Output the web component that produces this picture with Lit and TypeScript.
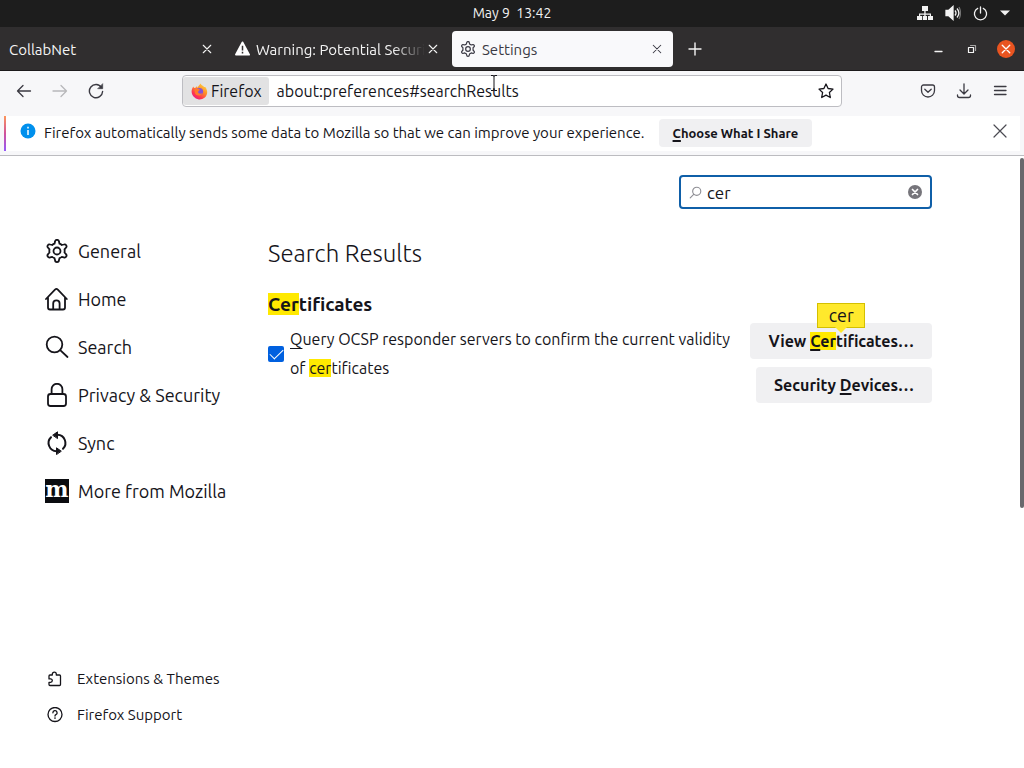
import { LitElement, html, css, svg, type TemplateResult } from "lit";
import { customElement } from "lit/decorators.js";

const gear = svg`<path d="M10 2.8 a2 2 0 0 1 4 0 l.5 1.9 a8 8 0 0 1 2.3 1.3 l2-.5 a2 2 0 0 1 2 3.4 l-1.3 1.5 a7 7 0 0 1 0 3.1 l1.3 1.5 a2 2 0 0 1 -2 3.4 l-2-.5 a8 8 0 0 1 -2.3 1.3 l-.5 1.9 a2 2 0 0 1 -4 0 l-.5-1.9 a8 8 0 0 1 -2.3-1.3 l-2 .5 a2 2 0 0 1 -2-3.4 l1.3-1.5 a7 7 0 0 1 0-3.1 L3.2 8.9 a2 2 0 0 1 2-3.4 l2 .5 a8 8 0 0 1 2.3-1.3 z"/><circle cx="12" cy="12" r="3.5"/>`;
const cross = svg`<path d="M3 3l10 10M13 3L3 13"/>`;

const line = (size: number, box: number, width: number, body: unknown): TemplateResult => html`
  <svg width=${size} height=${size} viewBox="0 0 ${box} ${box}" fill="none" stroke="currentColor"
    stroke-width=${width} stroke-linecap="round" stroke-linejoin="round" aria-hidden="true">${body}</svg>`;

const sections: [string, unknown][] = [
  ["General", gear],
  ["Home", svg`<path d="M1 12 10 2.600a2 2 0 0 1 2.800 0L21.800 12M3 10.500V20.500a2 2 0 0 0 2 2h13a2 2 0 0 0 2-2V10.500M8.200 22.500v-6a3.200 3.200 0 0 1 6.400 0v6"/>`],
  ["Search", svg`<circle cx="9.500" cy="9.500" r="7.800"/><path d="M15.200 15.200 22.500 22"/>`],
  ["Privacy & Security", svg`<rect x="3" y="11" width="18" height="12" rx="2.500"/><path d="M6.600 11V6.200a5.400 5.400 0 0 1 10.800 0V11"/>`],
  ["Sync", svg`<path d="M6 6.200A8.200 8.200 0 0 0 11.500 20.200M18 17.800A8.200 8.200 0 0 0 12.500 3.800" stroke-width="2"/><path d="M8 4 12.500.8v6.400zM16 20 11.500 16.800v6.400z" fill="currentColor" stroke-width="1"/>`],
  ["More from Mozilla", svg`<path d="M0 0h24v24H0z" fill="#0b0c10" stroke="none"/><text x="12" y="18" text-anchor="middle" font-family="DejaVu Serif, serif" font-size="22" font-weight="700" fill="#fff" stroke="none">m</text>`],
];

const links: [string, unknown][] = [
  ["Extensions & Themes", svg`<path d="M2 5.500V5a1 1 0 0 1 1-1h2.300V3.200a2 2 0 0 1 4 0V4h3.200a1 1 0 0 1 1 1v8.500a1 1 0 0 1-1 1H3a1 1 0 0 1-1-1v-2.200h1.600a1.700 1.700 0 0 0 0-3.400H2z"/>`],
  ["Firefox Support", svg`<circle cx="8" cy="7.500" r="7"/><path d="M5.900 5.800a2.100 2.100 0 1 1 3 1.900c-.6.300-.9.600-.9 1.300"/><circle cx="8" cy="11.100" r=".3"/>`],
];

@customElement("app-root")
export class AppRoot extends LitElement {
  static styles = css`
    :host {
      display: flex;
      flex-direction: column;
      min-height: 100vh;
      position: relative;
      background: #fff;
      color: #15141a;
      font: 15px/20px Ubuntu, "Noto Sans", sans-serif;
    }
    * { box-sizing: border-box; }
    svg { display: block; flex: none; }
    button, input { font: inherit; color: inherit; }
    button { border: 0; padding: 0; background: none; }
    a { color: inherit; text-decoration: none; }
    u { text-decoration-thickness: 1px; text-underline-offset: 3px; text-decoration-skip-ink: none; }
    button u { text-decoration-thickness: 2px; text-underline-offset: 2px; }
    mark { background: #ffe900; color: inherit; }

    .system { display: grid; grid-template-columns: 1fr auto 1fr; align-items: center; height: 27px; padding: 0 14px 1px; background: #1d1d1d; color: #f2f2f2; font-size: 14px; white-space: pre; }
    .status { display: flex; justify-content: flex-end; align-items: center; gap: 12px; grid-column: 3; }
    .clock { grid-column: 2; }

    .tabs { display: flex; align-items: center; height: 44px; padding-right: 9px; background: #302e2f; color: #f4f4f4; border-bottom: 1px solid #1c1a1b; }
    .tab { display: flex; align-items: center; gap: 6px; flex: 0 1 226px; height: 36px; padding: 0 13px 0 9px; min-width: 0; }
    .tab .name { flex: 1; overflow: hidden; white-space: nowrap; padding-top: 2px; }
    .tab .faded { margin-right: -4px; mask-image: linear-gradient(to left, transparent, #000 32px); }
    .tab.current { flex-basis: 221px; padding: 0 10px 0 8px; border-radius: 4px; background: #f9f9fb; color: #3a3944; }
    .add { margin-left: 14px; }
    .window { display: flex; align-items: center; gap: 18px; margin-left: auto; }
    .quit { display: grid; place-items: center; width: 18px; height: 18px; border-radius: 50%; background: #e95420; color: #fff; }

    .toolbar { display: flex; align-items: center; height: 41px; padding: 0 16px 1px; background: #f7f7f9; color: #3b3a42; }
    .nav { display: flex; gap: 20px; flex: 0 0 166px; }
    .off { color: #b8b8ba; }
    .address { display: flex; align-items: center; flex: 0 1 660px; height: 32px; border: 1px solid #bdbdc2; border-radius: 4px; background: #fff; color: #15141a; padding-right: 7px; font-size: 16px; }
    .identity { display: flex; align-items: center; gap: 3px; height: 28px; padding: 0 7px 0 8px; margin-right: 8px; border-radius: 3px; background: #e2e2e3; }
    .address input { flex: 1; min-width: 0; border: 0; outline: 0; padding: 0; background: none; }
    .tools { display: flex; gap: 20px; margin-left: auto; }

    .notice { display: flex; align-items: center; height: 44px; padding: 4px 4px 5px; background: #f7f7f9; border-bottom: 1px solid #bcbcc0; }
    .notice .body { display: flex; align-items: center; flex: 1; height: 35px; border-left: 2px solid; border-image: linear-gradient(#ff9a56, #d0529b 50%, #9059ff) 1; padding: 0 12px 0 14px; background: #fff; }
    .notice .text { margin: 0 14px 0 8px; }
    .share { height: 28px; padding: 0 14px; border-radius: 4px; background: #f0f0f2; font-size: 13px; font-weight: 700; }
    .info, .dismiss { margin-bottom: 4px; }
    .dismiss { margin-left: auto; color: #4b4a52; }

    .page { display: grid; grid-template-columns: 223px minmax(0, 664px); flex: 1; padding: 19px 45px 35px; font-size: 16px; line-height: 29px; }
    .side { display: flex; flex-direction: column; justify-content: space-between; padding-top: 52px; font-size: 18px; }
    .side nav { display: flex; flex-direction: column; }
    .side a { display: flex; align-items: center; gap: 9px; height: 48px; white-space: nowrap; }
    .side .small { gap: 14px; height: 36px; padding-left: 2px; font-size: 15px; line-height: 20px; }
    .find { display: flex; align-items: center; gap: 5px; width: 253px; height: 34px; margin-left: auto; padding: 0 8px; border: 2px solid #0f5fa8; border-radius: 4px; font-size: 17px; }
    .find input { flex: 1; min-width: 0; padding: 0; border: 0; outline: 0; background: none; }
    .find label { color: #8f8f95; }
    h1 { margin: 30px 0 0; font-size: 24px; font-weight: 300; line-height: 30px; }
    h2 { margin: 20px 0 0; font-size: 19px; line-height: 30px; }
    .row { display: flex; align-items: flex-start; gap: 4px; margin-top: 4px; }
    .option { display: flex; align-items: center; gap: 6px; flex: 1; min-width: 0; margin-top: 2px; }
    .option input { appearance: none; flex: none; width: 16px; height: 16px; margin: 0; border-radius: 2px; background: #0060df; display: grid; }
    .option input::after { content: ""; width: 12px; height: 6px; margin: 3px 2px; border: solid #fff; border-width: 0 0 1px 1px; rotate: -45deg; }
    .actions { display: flex; flex-direction: column; align-items: flex-end; gap: 8px; }
    .actions button { position: relative; height: 36px; padding: 0 18px; border-radius: 4px; background: #f0f0f2; font-weight: 700; }
    .tip { position: absolute; left: 50%; bottom: 31px; translate: -50% 0; width: 48px; height: 25px; background: #ffe92c; border: 1px solid #d4c000; font-size: 18px; font-weight: 400; line-height: 23px; }
    .tip::after { content: ""; position: absolute; left: 17px; top: 23px; border: 6px solid transparent; border-top-color: #ffe92c; border-bottom: 0; }
    .thumb { position: absolute; right: 0; top: 158px; width: 4px; height: 350px; border-radius: 2px; background: #68686c; }
    .pointer { position: absolute; left: 489px; top: 75px; }
  `;

  render() {
    return html`
      <header class="system">
        <span class="clock">May 9  13:42</span>
        <div class="status">
          <svg width="16" height="16" viewBox="0 0 16 16" fill="currentColor"><path d="M5 1h6v5H8.600v2.500H14V11h2v4h-5v-4h1.800V9.700H8.600V11h1.400v4H5.800v-4h1.500V9.700H3.200V11H5v4H0v-4h2V8.500h5.300V6H5z"/></svg>
          <svg width="16" height="16" viewBox="0 0 16 16" fill="none" stroke="currentColor" stroke-width="1.300"><path d="M1 5.500h2.500L8 1.500v13l-4.500-4H1z" fill="currentColor"/><path d="M10 5.500q2 2.500 0 5M12 3.500q3.800 4.500 0 9" /><path d="M14 2q3 6 0 12" opacity=".4"/></svg>
          ${line(15, 16, 1.4, svg`<path d="M5 2.500a6.500 6.500 0 1 0 6 0M8 1v6.500"/>`)}
          <svg width="10" height="6" viewBox="0 0 10 6" fill="currentColor"><path d="M0 .5h10L5 5.500z"/></svg>
        </div>
      </header>

      <div class="tabs">
        <div class="tab"><span class="name">CollabNet</span><button aria-label="Close CollabNet">${line(12, 16, 1.5, cross)}</button></div>
        <div class="tab">
          <svg width="15" height="15" viewBox="0 0 16 16"><path d="M8 1.500 15 14.500H1z" fill="#fff" stroke="#fff" stroke-width="2" stroke-linejoin="round"/><path d="M8 5v5M8 11.500v1.700" stroke="#302e2f" stroke-width="1.600"/></svg>
          <span class="name faded">Warning: Potential Securi</span><button aria-label="Close warning">${line(12, 16, 1.5, cross)}</button>
        </div>
        <div class="tab current">${line(16, 24, 1.8, gear)}<span class="name">Settings</span><button aria-label="Close Settings">${line(12, 16, 1.4, cross)}</button></div>
        <button class="add" aria-label="New tab">${line(16, 16, 1.4, svg`<path d="M8 2v12M2 8h12"/>`)}</button>
        <div class="window">
          <button aria-label="Minimize">${line(16, 16, 1.3, svg`<path d="M4 10.500h7"/>`)}</button>
          <button aria-label="Restore">${line(14, 14, 1.2, svg`<path d="M3.500 5.500h5v5h-5z"/><path d="M5.500 3.500h5v5" opacity=".6"/>`)}</button>
          <button class="quit" aria-label="Close window">${line(12, 16, 1.8, cross)}</button>
        </div>
      </div>

      <div class="toolbar">
        <div class="nav">
          <button aria-label="Back">${line(16, 16, 1.3, svg`<path d="M14.500 8H1.500M7 2.500 1.500 8 7 13.500"/>`)}</button>
          <button class="off" aria-label="Forward" disabled>${line(16, 16, 1.3, svg`<path d="M1 8h13.500M9 2.500 14.500 8 9 13.500"/>`)}</button>
          <button aria-label="Reload">${line(16, 16, 1.4, svg`<path d="M13.500 4.500A6.600 6.600 0 1 0 14.600 8.500"/><path d="M14.700 1v4.700H10z" fill="currentColor" stroke-width=".6"/>`)}</button>
        </div>
        <div class="address">
          <span class="identity">
            <svg width="17" height="17" viewBox="0 0 17 17" aria-hidden="true">
              <defs><linearGradient id="fox" x1=".9" y1="0" x2=".2" y2="1"><stop offset="0" stop-color="#ffe14a"/><stop offset=".4" stop-color="#ff9326"/><stop offset=".75" stop-color="#ff3750"/><stop offset="1" stop-color="#e5188a"/></linearGradient></defs>
              <path d="M2.300 3.500 3 5 5 4.500 6 3l.4 2C8 2.500 8.500 2 9.500.6c1 2 2.500 2 3.500 3.400L14.300 4c3 4 2.200 8.500-.8 10.800a8 8 0 0 1-11-1.200C-.2 10.500.2 6.500 2.300 3.500z" fill="url(#fox)"/>
              <circle cx="8.500" cy="8.500" r="3.600" fill="#8552d6"/><path d="M3.500 6.500c2-1.500 4.500-.8 5.500.3L7.200 8.500c-.8 1.700 2 3 4.300 1.400-1.500 3.500-6.500 3.200-7.500.3z" fill="#ff7b2c"/>
            </svg>Firefox</span>
          <input aria-label="Address" .value=${"about:preferences#searchResults"} />
          <button aria-label="Bookmark">${line(16, 16, 1.3, svg`<path d="m8 1 2.100 4.500 4.900.6-3.600 3.400.9 5L8 12.100l-4.300 2.400.9-5L1 6.100l4.900-.6z"/>`)}</button>
        </div>
        <div class="tools">
          <button aria-label="Pocket">${line(16, 16, 1.3, svg`<path d="M3.500 2h9a2 2 0 0 1 2 2v3.500a6.500 6.500 0 0 1-13 0V4a2 2 0 0 1 2-2zM4.800 6.200 8 9.300l3.200-3.100"/>`)}</button>
          <button aria-label="Downloads">${line(16, 16, 1.3, svg`<path d="M8 .8v9.700M4 7l4 4 4-4M1.500 12v.500a2 2 0 0 0 2 2h9a2 2 0 0 0 2-2v-.500"/>`)}</button>
          <button aria-label="Menu">${line(16, 16, 1.3, svg`<path d="M2.500 3.500h11.500M2.500 7.500h11.500M2.500 11.500h11.500"/>`)}</button>
        </div>
      </div>

      <div class="notice">
        <div class="body">
          <svg class="info" width="16" height="16" viewBox="0 0 16 16"><circle cx="8" cy="8" r="7.500" fill="#0090ed"/><path d="M8 7v5M8 3.800v1.700" stroke="#fff" stroke-width="1.500"/></svg>
          <span class="text">Firefox automatically sends some data to Mozilla so that we can improve your experience.</span>
          <button class="share"><u>C</u>hoose What I Share</button>
          <button class="dismiss" aria-label="Dismiss">${line(16, 16, 1.2, svg`<path d="M2 2l12 12M14 2 2 14"/>`)}</button>
        </div>
      </div>

      <main class="page">
        <aside class="side">
          <nav aria-label="Settings">
            ${sections.map(([name, icon]) => html`<a href="#">${line(24, 24, 1.8, icon)}${name}</a>`)}
          </nav>
          <nav aria-label="Help">
            ${links.map(([name, icon]) => html`<a class="small" href="#">${line(16, 16, 1.3, icon)}${name}</a>`)}
          </nav>
        </aside>
        <section>
          <div class="find">
            <label for="query" aria-label="Find in Settings">${line(13, 16, 1.4, svg`<circle cx="9.500" cy="6.500" r="5"/><path d="M5.800 10.200 1.500 14.500"/>`)}</label>
            <input id="query" type="text" .value=${"cer"} />
            <button aria-label="Clear"><svg width="14" height="14" viewBox="0 0 14 14"><circle cx="7" cy="7" r="7" fill="#76757b"/><path d="m4.500 4.500 5 5m0-5-5 5" stroke="#fff" stroke-width="1.700" stroke-linecap="round"/></svg></button>
          </div>
          <h1>Search Results</h1>
          <h2><mark>Cer</mark>tificates</h2>
          <div class="row">
            <label class="option"><input type="checkbox" checked /><span><u>Q</u>uery OCSP responder servers to confirm the current validity of <mark>cer</mark>tificates</span></label>
            <div class="actions">
              <button>View <mark><u>C</u>er</mark>tificates…<span class="tip">cer</span></button>
              <button>Security <u>D</u>evices…</button>
            </div>
          </div>
        </section>
      </main>
      <div class="thumb"></div>
      <svg class="pointer" width="10" height="17" viewBox="0 0 10 17" fill="none" stroke="#15141a"><path d="M2 .5h2.500l.5 1 .5-1H8M5 1v14M2 15.500h2.500l.5-1 .5 1H8"/></svg>
    `;
  }
}
